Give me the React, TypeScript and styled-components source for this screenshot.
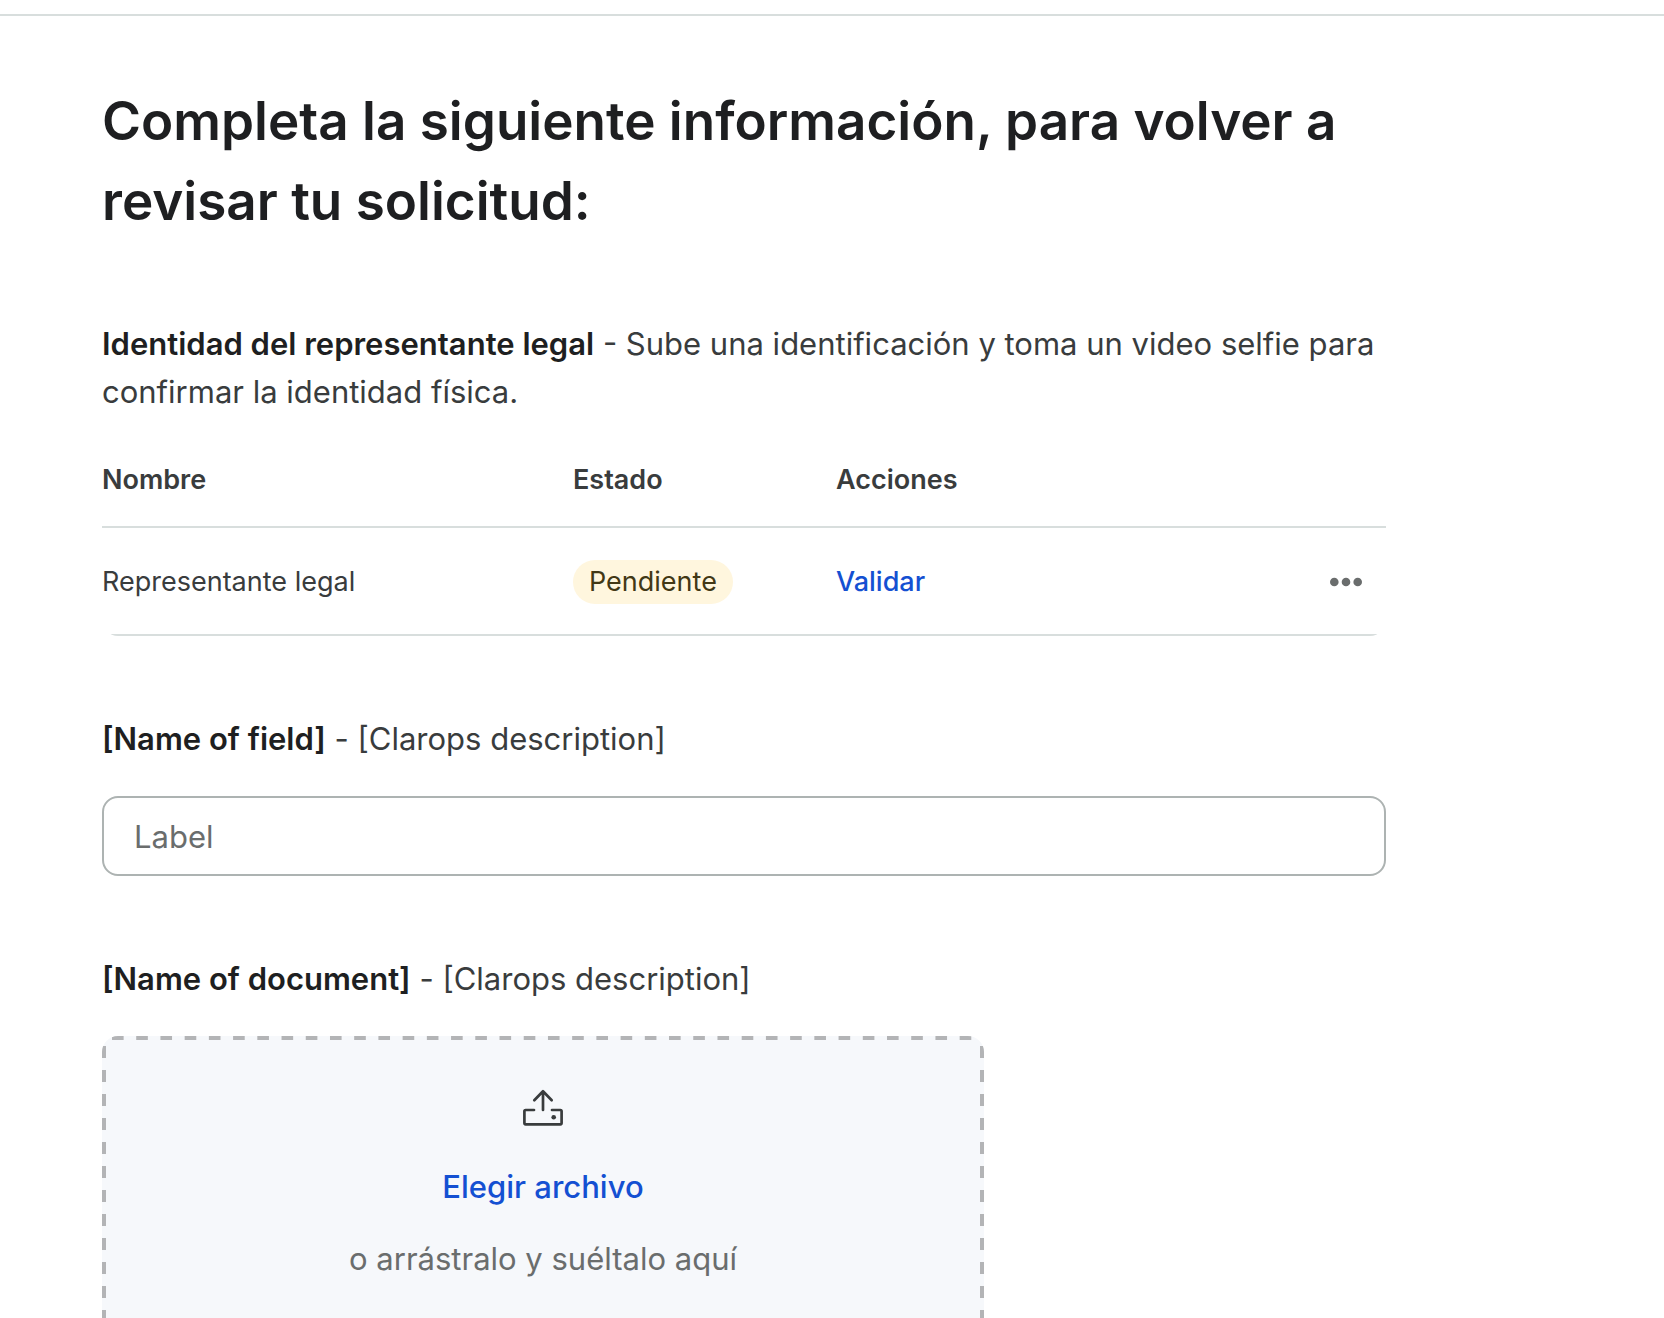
import React, { useId } from "react";
import styled, { createGlobalStyle } from "styled-components";

const color = {
  title: "#1e1f21",
  text: "#393c3d",
  muted: "#6a6d6d",
  link: "#1450d2",
  line: "#d8dedd",
  inputLine: "#adb3b2",
  dash: "#b3b4b6",
  dropzone: "#f6f8fb",
  badge: "#fff6de",
  badgeText: "#423815",
};

const GlobalStyle = createGlobalStyle`
  *, *::before, *::after { box-sizing: border-box; }
  body {
    margin: 0;
    background: #fff;
    color: ${color.text};
    font-family: Inter, "Liberation Sans", sans-serif;
    font-size: 31px;
    line-height: 48px;
  }
  button, input { font: inherit; }
`;

const Page = styled.div`
  height: 100vh;
  overflow: hidden;
  padding-top: 14px;
`;

const Content = styled.main`
  border-top: 2px solid ${color.line};
  padding: 65px 102px;
`;

const Form = styled.form`
  display: flex;
  flex-direction: column;
  gap: 79px;
  max-width: 1284px;
`;

const Title = styled.h1`
  margin: 0;
  color: ${color.title};
  font-size: 53px;
  font-weight: 600;
  line-height: 80px;
`;

const Section = styled.section`
  display: flex;
  flex-direction: column;
  gap: 33px;
`;

const Description = styled.p`
  margin: 0;
`;

const Name = styled.strong`
  color: ${color.title};
  font-weight: 600;
`;

const TableFrame = styled.div`
  overflow: hidden;
  border-radius: 0 0 16px 16px;
`;

const Table = styled.table`
  width: 100%;
  table-layout: fixed;
  border-collapse: separate;
  border-spacing: 0;
  font-size: 27px;
  line-height: 44px;
  text-align: left;
`;

const HeadCell = styled.th<{ $width?: number }>`
  width: ${(p) => (p.$width ? `${p.$width}px` : "auto")};
  padding: 9px 0 24px;
  border-bottom: 2px solid ${color.line};
  font-weight: 600;
`;

const Cell = styled.td`
  padding: 32px 0 30px;
  border-bottom: 2px solid ${color.line};
`;

const Badge = styled.span`
  display: inline-block;
  padding: 0 16px;
  border-radius: 22px;
  background: ${color.badge};
  color: ${color.badgeText};
  vertical-align: top;
`;

const Actions = styled.div`
  display: flex;
  align-items: center;
  justify-content: space-between;
  padding-right: 24px;
`;

const Link = styled.a`
  color: ${color.link};
  font-weight: 500;
  text-decoration: none;
`;

const MenuButton = styled.button`
  display: flex;
  padding: 0;
  border: 0;
  background: none;
  color: ${color.muted};
  cursor: pointer;
`;

const Label = styled.label`
  display: block;
`;

const TextInput = styled.input`
  width: 100%;
  height: 80px;
  padding: 0 30px;
  border: 2px solid ${color.inputLine};
  border-radius: 16px;
  background: #fff;
  color: ${color.text};

  &::placeholder {
    color: ${color.muted};
    opacity: 1;
  }
`;

const Dropzone = styled.div`
  position: relative;
  display: flex;
  flex-direction: column;
  align-items: center;
  max-width: 882px;
  padding: 48px 48px 72px;
  border-radius: 16px;
  background: ${color.dropzone};
  overflow: hidden;

  &::before {
    content: "";
    position: absolute;
    inset: 0;
    padding: 10px 0 0 10px;
    pointer-events: none;
    --across: linear-gradient(90deg, ${color.dash} 50%, transparent 50%);
    --down: linear-gradient(${color.dash} 50%, transparent 50%);
    background-image: var(--across), var(--across), var(--down), var(--down);
    background-size: 24px 4px, 24px 4px, 4px 24px, 4px 24px;
    background-repeat: round no-repeat, round no-repeat, no-repeat repeat, no-repeat repeat;
    background-position: 0 -10px, 0 100%, -10px 0, 100% 0;
    background-origin: content-box;
  }
`;

const UploadIcon = styled.svg`
  width: 48px;
  height: 48px;
  margin-bottom: 31px;
  color: ${color.text};
`;

const FileButton = styled.button`
  padding: 0;
  border: 0;
  background: none;
  color: ${color.link};
  font-weight: 500;
  cursor: pointer;
`;

const Hint = styled.p`
  margin: 24px 0 0;
  color: ${color.muted};
`;

function TextField({ name, description }: { name: string; description: string }) {
  const id = useId();
  return (
    <Section>
      <Label htmlFor={id}>
        <Name>{name}</Name> - {description}
      </Label>
      <TextInput id={id} type="text" placeholder="Label" />
    </Section>
  );
}

function FileField({ name, description }: { name: string; description: string }) {
  const id = useId();
  return (
    <Section>
      <Description id={id}>
        <Name>{name}</Name> - {description}
      </Description>
      <Dropzone role="group" aria-labelledby={id}>
        <UploadIcon
          viewBox="0 0 48 48"
          fill="none"
          stroke="currentColor"
          strokeWidth="2.7"
          strokeLinecap="round"
          strokeLinejoin="round"
          aria-hidden="true"
        >
          <path d="M24 26V7.3M15.3 16.3 24 7.3l8.7 9" />
          <path d="M15 26H6.6a1.2 1.2 0 0 0-1.2 1.2v11.900a1.2 1.2 0 0 0 1.2 1.2h34.8a1.2 1.2 0 0 0 1.2-1.2V27.2a1.2 1.2 0 0 0-1.2-1.2H33" />
          <circle cx="34.7" cy="33.3" r="2.3" fill="currentColor" stroke="none" />
        </UploadIcon>
        <FileButton type="button">Elegir archivo</FileButton>
        <Hint>o arrástralo y suéltalo aquí</Hint>
      </Dropzone>
    </Section>
  );
}

export default function App() {
  return (
    <>
      <GlobalStyle />
      <Page>
        <Content>
          <Form>
            <Title>Completa la siguiente información, para volver a revisar tu solicitud:</Title>
            <Section>
              <Description>
                <Name>Identidad del representante legal</Name> - Sube una identificación y toma un
                video selfie para confirmar la identidad física.
              </Description>
              <TableFrame>
                <Table>
                  <thead>
                    <tr>
                      <HeadCell scope="col" $width={471}>Nombre</HeadCell>
                      <HeadCell scope="col" $width={263}>Estado</HeadCell>
                      <HeadCell scope="col">Acciones</HeadCell>
                    </tr>
                  </thead>
                  <tbody>
                    <tr>
                      <Cell>Representante legal</Cell>
                      <Cell>
                        <Badge>Pendiente</Badge>
                      </Cell>
                      <Cell>
                        <Actions>
                          <Link href="#validar">Validar</Link>
                          <MenuButton type="button" aria-label="Más acciones">
                            <svg width="32" height="32" viewBox="0 0 32 32" fill="currentColor">
                              <circle cx="4.3" cy="16" r="4.3" />
                              <circle cx="16" cy="16" r="4.3" />
                              <circle cx="27.7" cy="16" r="4.3" />
                            </svg>
                          </MenuButton>
                        </Actions>
                      </Cell>
                    </tr>
                  </tbody>
                </Table>
              </TableFrame>
            </Section>
            <TextField name="[Name of field]" description="[Clarops description]" />
            <FileField name="[Name of document]" description="[Clarops description]" />
          </Form>
        </Content>
      </Page>
    </>
  );
}
